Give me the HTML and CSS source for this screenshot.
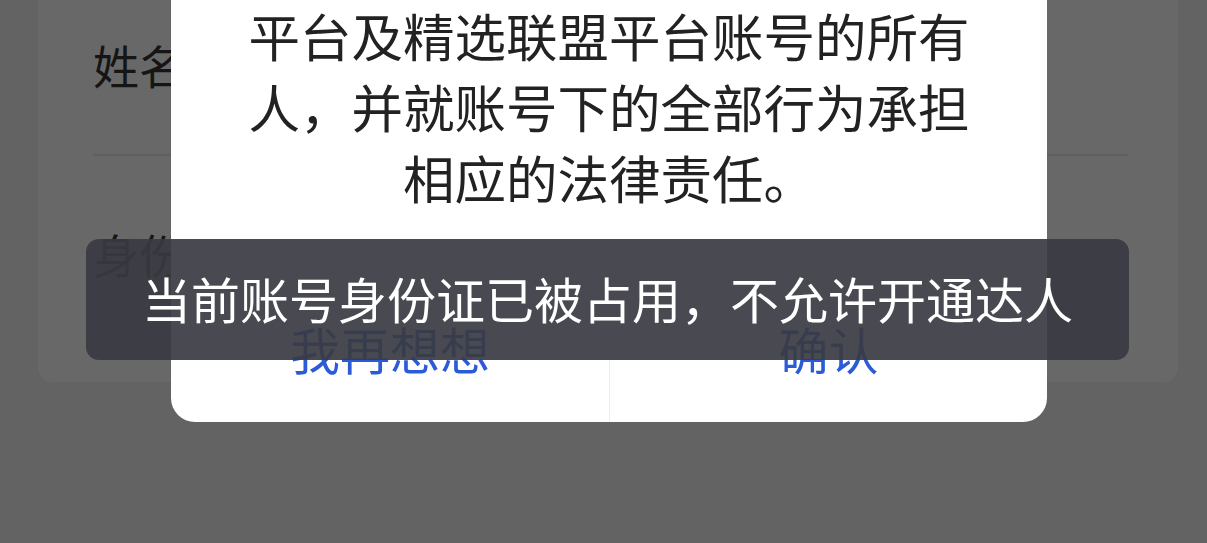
FILE: index.html
```html
<!DOCTYPE html>
<html lang="zh-CN">
<head>
<meta charset="utf-8">
<title>开通达人</title>
<link rel="stylesheet" href="styles.css">
</head>
<body>
<div class="page">
  <div class="card">
    <div class="row row-name">姓名</div>
    <div class="row row-id">身份证号</div>
  </div>
</div>
<div class="mask">
  <div class="dialog">
    <div class="dialog-body">
      <p class="dialog-text">平台及精选联盟平台账号的所有人，并就账号下的全部行为承担相应的法律责任。</p>
    </div>
    <div class="dialog-actions">
      <div class="btn">我再想想</div>
      <div class="btn btn-confirm">确认</div>
    </div>
  </div>
</div>
<div class="toast">当前账号身份证已被占用，不允许开通达人</div>
</body>
</html>
```
FILE: styles.css
```css
html, body {
  margin: 0;
  padding: 0;
  width: 1207px;
  height: 543px;
  overflow: hidden;
  background: #636363;
  font-family: "Noto Sans CJK SC", "Noto Sans", sans-serif;
}

.page {
  padding: 0 29px 0 38px;
}

.card {
  margin-top: -20px;
  background: #686868;
  border-radius: 14px;
  padding: 0 50px 21px 55px;
}

.row {
  display: flex;
  align-items: center;
  font-size: 46px;
  color: #151515;
}

.row-name {
  height: 176px;
  padding-bottom: 6px;
  box-sizing: border-box;
  border-bottom: 2px solid #5f5f5f;
}

.row-id {
  height: 205px;
  align-items: flex-start;
  line-height: 46px;
  box-sizing: border-box;
  padding-top: 74px;
}

.mask {
  position: fixed;
  inset: 0;
  display: flex;
  justify-content: center;
  align-items: flex-end;
  padding: 0 160px 121px 171px;
}

.dialog {
  width: 876px;
  background: #ffffff;
  border-radius: 24px;
  display: flex;
  flex-direction: column;
}

.dialog-body {
  padding: 60px 70px 0;
}

.dialog-text {
  margin: 0;
  font-size: 51.5px;
  line-height: 71px;
  color: #222222;
  text-align: center;
}

.dialog-actions {
  margin-top: 69px;
  display: grid;
  grid-template-columns: 1fr 1fr;
  height: 140px;
  border-top: 1px solid #ededed;
}

.btn {
  display: flex;
  align-items: center;
  justify-content: center;
  font-size: 50px;
  color: #2b5bd6;
  padding-bottom: 8px;
}

.btn-confirm {
  border-left: 1px solid #ececec;
}

.toast {
  position: fixed;
  left: 86px;
  top: 239px;
  width: 1043px;
  height: 121px;
  border-radius: 13px;
  background: rgba(58, 59, 66, 0.92);
  color: #ffffff;
  font-size: 49px;
  display: flex;
  align-items: center;
  justify-content: center;
  padding-bottom: 5px;
  box-sizing: border-box;
}
```
